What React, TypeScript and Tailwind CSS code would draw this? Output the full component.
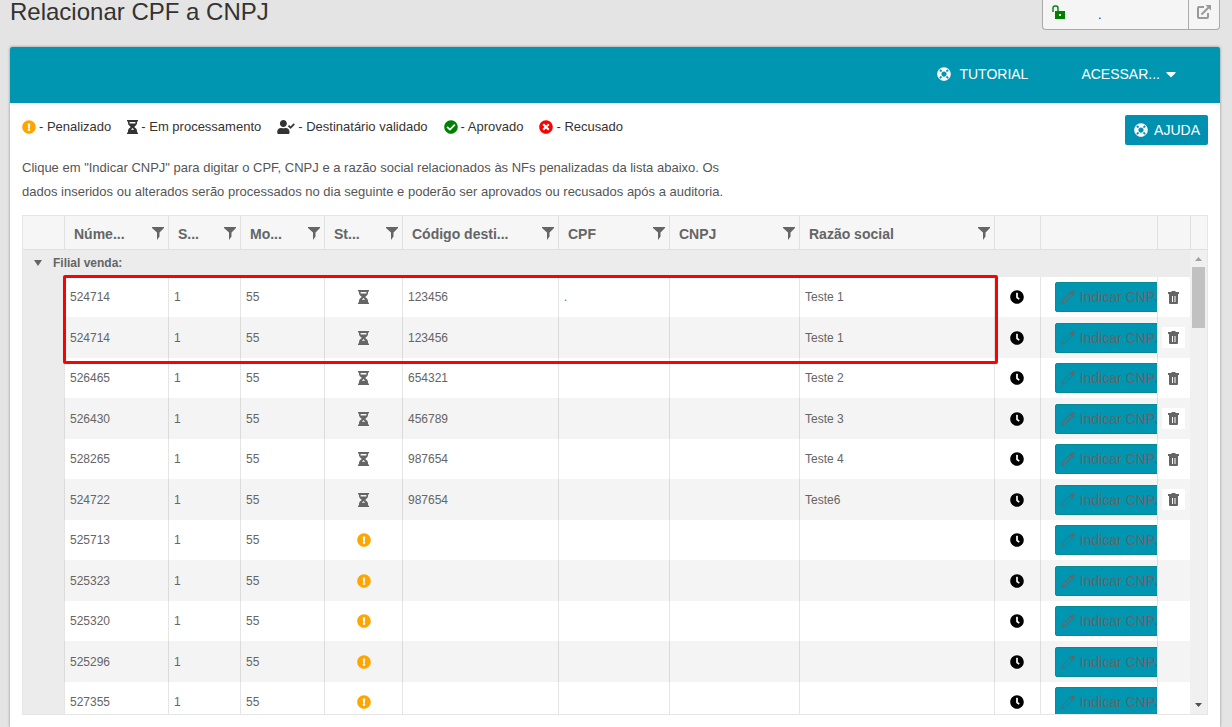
import React from 'react';
import {
  FaCaretDown,
  FaCheckCircle,
  FaClock,
  FaExclamationCircle,
  FaLifeRing,
  FaTimesCircle,
  FaUserCheck,
} from 'react-icons/fa';

interface Nota {
  numero: string;
  codigo?: string;
  cpf?: string;
  razao?: string;
}

const notas: Nota[] = [
  { numero: '524714', codigo: '123456', cpf: '.', razao: 'Teste 1' },
  { numero: '524714', codigo: '123456', razao: 'Teste 1' },
  { numero: '526465', codigo: '654321', razao: 'Teste 2' },
  { numero: '526430', codigo: '456789', razao: 'Teste 3' },
  { numero: '528265', codigo: '987654', razao: 'Teste 4' },
  { numero: '524722', codigo: '987654', razao: 'Teste6' },
  { numero: '525713' },
  { numero: '525323' },
  { numero: '525320' },
  { numero: '525296' },
  { numero: '527355' },
];

const headers = ['Núme...', 'S...', 'Mo...', 'St...', 'Código desti...', 'CPF', 'CNPJ', 'Razão social'];

const HourglassIcon = () => (
  <svg className="h-3.5 w-[11px]" viewBox="0 0 11 14" fill="currentColor">
    <path d="M0 0H11V1.6H0zM0 12.4H11V14H0z" />
    <path
      fillRule="evenodd"
      d="M1 1H10V3.6Q10 5 7.2 7Q10 9 10 10.4V13H1V10.4Q1 9 3.8 7Q1 5 1 3.6zM2.6 2V3.4H8.4V2zM5.5 8L3.8 9.8H7.2z"
    />
  </svg>
);

const UnlockIcon = () => (
  <svg className="h-3.5 w-3.5" viewBox="0 0 14 14" fill="none">
    <path d="M1 7V3Q1 1 3 1H4Q6 1 6 3V6" stroke="#008000" strokeWidth="1.4" />
    <path fillRule="evenodd" d="M3 6H13V14H3zM7 9V11H9V9z" fill="#008000" />
  </svg>
);

const ExternalIcon = () => (
  <svg className="size-3.5" viewBox="0 0 14 14" fill="none" stroke="#999" strokeWidth="2">
    <path d="M7 2H2Q1 2 1 3V12Q1 13 2 13H10Q11 13 11 12V8" />
    <path d="M4.5 9.5L12 2" />
    <path d="M8.5 0H14V5.5z" fill="#999" stroke="none" />
  </svg>
);

const FilterIcon = () => (
  <svg className="h-[13px] w-3" viewBox="0 0 12 13" fill="currentColor">
    <path d="M0 0H12V1L7.5 5.5V9.5L5 13V5.5L0 1z" />
  </svg>
);

const PencilIcon = () => (
  <svg className="size-3.5 shrink-0" viewBox="0 0 14 14" fill="none" stroke="currentColor">
    <path d="M.8 13.2L1.6 10.2L9.6 2.2L11.8 4.4L3.8 12.4z" />
    <path d="M8.5 2.2L9.6 1.2L10.4 2L11.4 .8Q12.6 -.1 13.5 .8Q14.2 1.7 13.2 2.8L12 3.8L12.8 4.5L11.8 5.5z" fill="currentColor" stroke="none" />
  </svg>
);

const TrashIcon = () => (
  <svg className="h-[13px] w-[11px]" viewBox="0 0 11 13" fill="currentColor">
    <path d="M0 1H3.5V0H7.5V1H11V3H0z" />
    <path fillRule="evenodd" d="M1 3H10V12Q10 13 9 13H2Q1 13 1 12zM4 5V11H5V5zM6.5 5V11H7.5V5z" />
  </svg>
);

const legend = [
  { label: 'Penalizado', icon: <FaExclamationCircle className="size-3.5 text-[#ffa500]" /> },
  { label: 'Em processamento', icon: <HourglassIcon /> },
  { label: 'Destinatário validado', icon: <FaUserCheck className="h-3.5 w-[18px]" /> },
  { label: 'Aprovado', icon: <FaCheckCircle className="size-3.5 text-[#008000]" /> },
  { label: 'Recusado', icon: <FaTimesCircle className="size-3.5 text-[#ff0000]" /> },
];

// shared by the header table and the body table
const Columns = () => (
  <colgroup>
    <col className="w-[41px]" />
    <col className="w-[104px]" />
    <col className="w-[72px]" />
    <col className="w-[84px]" />
    <col className="w-[78px]" />
    <col className="w-[156px]" />
    <col className="w-[111px]" />
    <col className="w-[130px]" />
    <col />
    <col className="w-[46px]" />
    <col className="w-[117px]" />
    <col className="w-[33px]" />
  </colgroup>
);

const cell = 'border-l border-black/10 p-0 px-[5px]';

const NotaRow: React.FC<{ nota: Nota }> = ({ nota }) => (
  <tr className="h-10 even:h-[41px] even:bg-[#f4f4f4]">
    <td className="bg-[#ececec] p-0" />
    <td className={cell}>{nota.numero}</td>
    <td className={cell}>1</td>
    <td className={cell}>55</td>
    <td className={cell}>
      <div className="flex justify-center">
        {nota.codigo ? <HourglassIcon /> : <FaExclamationCircle className="size-3.5 text-[#ffa500]" />}
      </div>
    </td>
    <td className={cell}>{nota.codigo}</td>
    <td className={cell}>{nota.cpf}</td>
    <td className={cell} />
    <td className={cell}>{nota.razao}</td>
    <td className={cell}>
      <FaClock className="mx-auto size-3.5 text-black" />
    </td>
    <td className="overflow-hidden border-l border-black/10 p-0 pl-3.5">
      <button className="flex h-[30px] w-32 items-center gap-[5px] rounded-xs border border-[#088a8f] bg-[#0095b0] pl-[5px] text-sm whitespace-nowrap">
        <PencilIcon />
        Indicar CNPJ
      </button>
    </td>
    <td className="border-l border-black/10 p-0">
      {nota.codigo && (
        <button aria-label="Excluir" className="mx-auto flex h-[21px] w-[23px] items-center justify-center bg-white">
          <TrashIcon />
        </button>
      )}
    </td>
  </tr>
);

const App: React.FC = () => {
  return (
    <div className="min-h-screen bg-[#e4e4e4] px-2.5 pr-3 font-['Liberation_Sans',Arial,sans-serif] text-[13px] text-[#333]">
      <header className="flex h-[47px] items-start justify-between">
        <h1 className="text-2xl leading-6 text-[#333]">Relacionar CPF a CNPJ</h1>
        <div className="flex h-[30px] w-[178px] rounded-b-sm border border-t-0 border-[#aaa] bg-[#f5f5f5]">
          <div className="flex flex-1 items-start gap-8 pt-[5px] pl-[9px]">
            <UnlockIcon />
            <span>.</span>
          </div>
          <button aria-label="Abrir" className="flex w-[31px] items-start justify-center border-l border-[#aaa] pt-[5px]">
            <ExternalIcon />
          </button>
        </div>
      </header>

      <main className="min-h-[680px] rounded-t-xs bg-white shadow-[0_0_3px_rgba(0,0,0,0.4)]">
        <nav className="flex h-14 items-center justify-end rounded-t-xs bg-[#0095b0] pr-11 pb-0.5 text-sm text-white">
          <a href="#" className="mr-[53px] flex items-center gap-2">
            <FaLifeRing className="size-3.5" />
            TUTORIAL
          </a>
          <button className="flex items-center gap-1.5">
            ACESSAR...
            <FaCaretDown className="h-4 w-2.5" />
          </button>
        </nav>

        <div className="px-3 pt-3 pb-3">
          <div className="flex h-[41px] items-start justify-between">
            <ul className="flex gap-4 pt-1">
              {legend.map((item) => (
                <li key={item.label} className="flex h-4 items-center gap-[3px]">
                  {item.icon}
                  <span>- {item.label}</span>
                </li>
              ))}
            </ul>
            <button className="flex h-[30px] items-center gap-1.5 rounded-xs bg-[#0090b0] pr-2 pl-[9px] text-sm text-white">
              <FaLifeRing className="size-3.5" />
              AJUDA
            </button>
          </div>

          <p className="max-w-[720px] leading-6 text-[#555]">
            Clique em "Indicar CNPJ" para digitar o CPF, CNPJ e a razão social relacionados às NFs penalizadas da
            lista abaixo. Os dados inseridos ou alterados serão processados no dia seguinte e poderão ser aprovados ou
            recusados após a auditoria.
          </p>

          <div className="mt-[11px] border border-[#e6e6e6] text-[#656565]">
            <div className="flex border-b border-[#e0e0e0] bg-[#f6f6f6]">
              <table className="w-full flex-1 table-fixed border-separate border-spacing-0 text-sm">
                <Columns />
                <thead>
                  <tr className="h-[33px]">
                    <th className="p-0" />
                    {headers.map((title) => (
                      <th key={title} className="border-l border-[#e0e0e0] p-0 pr-1 pl-[9px] text-left">
                        <div className="flex items-center justify-between pt-0.5">
                          <span className="whitespace-nowrap">{title}</span>
                          <FilterIcon />
                        </div>
                      </th>
                    ))}
                    <th className="border-l border-[#e0e0e0] p-0" />
                    <th className="border-l border-[#e0e0e0] p-0" />
                    <th className="border-l border-[#e0e0e0] p-0" />
                  </tr>
                </thead>
              </table>
              <div className="w-[17px] border-l border-[#e0e0e0]" />
            </div>

            <div className="flex h-[464px] overflow-hidden">
              <div className="relative flex-1">
                <table className="w-full table-fixed border-separate border-spacing-0 text-xs">
                  <Columns />
                  <thead>
                    <tr className="h-[27px] bg-[#ececec] text-left">
                      <th colSpan={12} className="p-0">
                        <button className="flex items-center gap-[11px] pb-0.5 pl-[11px]">
                          <svg className="h-1.5 w-2" viewBox="0 0 8 6" fill="currentColor">
                            <path d="M0 0H8L4 6z" />
                          </svg>
                          Filial venda:
                        </button>
                      </th>
                    </tr>
                  </thead>
                  <tbody>
                    {notas.map((nota, idx) => (
                      <NotaRow key={idx} nota={nota} />
                    ))}
                  </tbody>
                </table>
                <div className="pointer-events-none absolute top-[25px] right-48 left-10 h-[89px] rounded-xs border-3 border-[#ff0000]" />
              </div>

              <div className="flex w-[17px] flex-col items-center bg-[#f0f0f0] pt-[7px] pb-[7px]">
                <svg className="h-1 w-[7px]" viewBox="0 0 7 4" fill="#a0a0a0">
                  <path d="M0 4H7L3.5 0z" />
                </svg>
                <div className="mt-1.5 h-[61px] w-[13px] bg-[#c1c1c1]" />
                <svg className="mt-auto h-1 w-[7px]" viewBox="0 0 7 4" fill="#505050">
                  <path d="M0 0H7L3.5 4z" />
                </svg>
              </div>
            </div>
          </div>
        </div>
      </main>
    </div>
  );
};

export default App;
